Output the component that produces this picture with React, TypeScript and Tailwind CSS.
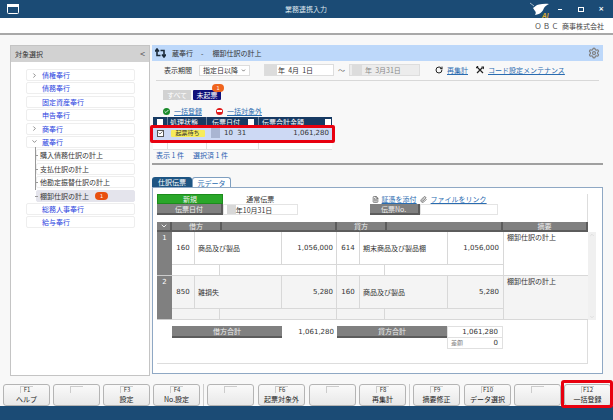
import { Check, ChevronDown, ChevronRight, Settings, RotateCw, FileText, Paperclip } from 'lucide-react'

const numFont = "[font-family:'DejaVu_Sans',sans-serif]"

interface TreeItem {
  label: string
  mark?: 'open' | 'closed'
}

const topItems: TreeItem[] = [
  { label: '債権奉行', mark: 'closed' },
  { label: '債務奉行' },
  { label: '固定資産奉行' },
  { label: '申告奉行' },
  { label: '商奉行', mark: 'closed' },
  { label: '蔵奉行', mark: 'open' },
]

const subItems = ['購入債務仕訳の計上', '支払仕訳の計上', '他勘定振替仕訳の計上', '棚卸仕訳の計上']

const fnKeys = [
  { key: 'F1', label: 'ヘルプ', after: 'mr-[3px]' },
  { key: '', label: '', after: 'mr-[3px]' },
  { key: 'F3', label: '設定', after: 'mr-[3px]' },
  { key: 'F4', label: 'No.設定', after: 'mr-[3px]', sep: true },
  { key: '', label: '', after: 'mr-[4px]' },
  { key: 'F6', label: '起票対象外', after: 'mr-[4px]' },
  { key: '', label: '', after: 'mr-[3px]' },
  { key: 'F8', label: '再集計', after: 'mr-[3px]', sep: true },
  { key: 'F9', label: '摘要修正', after: 'mr-[4px]' },
  { key: 'F10', label: 'データ選択', after: 'mr-[3px]' },
  { key: '', label: '', after: 'mr-[3px]' },
  { key: 'F12', label: '一括登録', after: '' },
]

const TreeRow = ({ item }: { item: TreeItem }) => (
  <div className="ml-[15px] flex h-[12px] w-[109px] items-center rounded-[2px] border border-[#eeeeee] bg-white">
    <span className="flex w-[15px] justify-center text-[#444444]">
      {item.mark === 'closed' && <ChevronRight size={7} strokeWidth={2} />}
      {item.mark === 'open' && <ChevronDown size={7} strokeWidth={2} />}
    </span>
    <span className="text-[#2a3fe0]">{item.label}</span>
  </div>
)

const HeadCell = ({ className, children }: { className: string; children?: React.ReactNode }) => (
  <div className={`flex items-center justify-center border-r-2 border-b-2 border-[#5c5c5c] bg-[#808080] text-[#eeeeee] ${className}`}>
    {children}
  </div>
)

const JournalRow = ({ no, dCode, dName, dAmt, cCode, cName, cAmt, tint }: {
  no: string
  dCode: string
  dName: string
  dAmt: string
  cCode: string
  cName: string
  cAmt: string
  tint: string
}) => (
  <div className={`flex h-[44px] ${tint}`}>
    <div className={`w-[15px] shrink-0 border-b border-[#cccccc] bg-[#808080] pt-[1px] text-center text-[7px] text-white ${numFont}`}>{no}</div>
    <div className="flex w-[331px] shrink-0 flex-col">
      <div className="flex h-[33px] items-center border-b border-[#d8d8d8]">
        <div className={`flex h-full w-[23px] items-center justify-center border-r border-[#d8d8d8] text-[7px] ${numFont}`}>{dCode}</div>
        <div className="flex h-full w-[87px] items-center border-r border-[#d8d8d8] pl-[3px]">{dName}</div>
        <div className={`flex h-full w-[55px] items-center justify-end border-r border-[#d8d8d8] pr-[3px] text-[7px] ${numFont}`}>{dAmt}</div>
        <div className={`flex h-full w-[23px] items-center justify-center border-r border-[#d8d8d8] text-[7px] ${numFont}`}>{cCode}</div>
        <div className="flex h-full w-[88px] items-center border-r border-[#d8d8d8] pl-[3px]">{cName}</div>
        <div className={`flex h-full w-[55px] items-center justify-end pr-[4px] text-[7px] ${numFont}`}>{cAmt}</div>
      </div>
      <div className="flex h-[11px] border-b border-[#d8d8d8]">
        <div className="w-[48px] border-r border-[#d8d8d8]" />
        <div className="w-[117px] border-r border-[#d8d8d8]" />
        <div className="w-[48px] border-r border-[#d8d8d8]" />
        <div className="w-[118px]" />
      </div>
    </div>
    <div className="w-[85px] shrink-0 border-b border-l border-[#d8d8d8] pl-[3px] leading-[11px]">棚卸仕訳の計上</div>
  </div>
)

const FnButton = ({ k }: { k: (typeof fnKeys)[number] }) => (
  <div className={`flex h-[22px] w-[47px] shrink-0 flex-col items-center rounded-[3px] border border-[#b4b4b4] bg-gradient-to-b from-[#fafafa] to-[#e8e8e8] ${k.after}`}>
    <div className="mt-[1px] flex h-[7px] w-[13px] items-center justify-center border-t border-l border-[#cccccc] text-[6px] leading-none text-[#333333]">
      {k.key}
    </div>
    <div className="mt-[1px] text-[7px] leading-[10px] text-[#222222]">{k.label}</div>
  </div>
)

export default function App() {
  return (
    <div className="flex h-[420px] w-[613px] flex-col overflow-hidden bg-[#f8f8f8] text-[7px] leading-[10px] text-[#333333] [font-family:'Noto_Sans_CJK_JP',sans-serif]">
      {/* Title bar */}
      <div className="flex h-[18px] shrink-0 items-center bg-[#1b4b75] pr-[9px] pl-[7px] text-white">
        <svg width="12" height="10" viewBox="0 0 12 10" fill="none" stroke="white">
          <rect x="0.5" y="0.5" width="11" height="9" rx="1" />
          <rect x="0.5" y="0.5" width="11" height="2" fill="white" />
        </svg>
        <span className="ml-[266px] text-[#dfe7ee]">業務連携入力</span>
        <svg className="mt-[1px] ml-auto" width="21" height="16" viewBox="0 0 21 16">
          <path d="M0 1l4 3" stroke="white" strokeWidth="0.6" />
          <path d="M3 6c2-1 3-3 6-3.500 3-.5 6-1 10-.5-2 1-4 2-5 4-1 3-3 6-9 7 1-2 1-3 0-4z" fill="white" />
          <text x="12" y="15.500" fontSize="6.500" fontWeight="700" fontStyle="italic" fill="#e0b030" fontFamily="Liberation Sans">AI</text>
        </svg>
        <span className="ml-[7px] h-[1px] w-[4px] bg-white" />
        <span className="ml-[16px] h-[5px] w-[6px] border border-white" />
        <span className={`ml-[14px] text-[7px] font-bold ${numFont}`}>×</span>
      </div>

      {/* Company strip */}
      <div className="flex h-[17px] shrink-0 items-center justify-end border-b-2 border-[#a8a8a8] bg-white pr-[9px] text-[#444444]">
        <span className="mr-[2px] tracking-[1.500px]">ＯＢＣ</span>
        <span>商事株式会社</span>
      </div>

      {/* Main */}
      <div className="flex min-h-0 flex-1 gap-[2px] pt-[10px] pl-[10px]">
        {/* Left tree */}
        <div className="flex h-[331px] w-[140px] shrink-0 flex-col border border-[#c4c4c4] bg-white">
          <div className="flex h-[16px] shrink-0 items-center justify-between bg-[#d2d2d2] px-[4px] text-[#333333]">
            <span>対象選択</span>
            <span className="text-[9px] text-[#555555]">&lt;</span>
          </div>
          <div className="flex flex-col gap-[1.400px] pt-[7px]">
            {topItems.map(item => <TreeRow key={item.label} item={item} />)}
            <div className="relative ml-[15px] flex flex-col gap-[1.400px]">
              <div className="absolute top-[-2px] left-[9px] h-[43px] w-[1px] bg-[#999999]" />
              {subItems.map((label, i) => (
                <div key={label} className="relative flex items-center pl-[10px]">
                  <span className="absolute top-[6px] left-[9px] h-[1px] w-[3px] bg-[#999999]" />
                  <div className={`flex h-[12px] w-[99px] items-center rounded-[2px] border pl-[3px] ${i === 3 ? 'border-[#e4e4ec] bg-[#e4e4ec]' : 'border-[#eeeeee] bg-white'}`}>
                    {label}
                    {i === 3 && (
                      <span className={`ml-[6px] flex h-[8px] w-[13px] items-center justify-center rounded-full bg-[#e8500f] text-[5px] text-white ${numFont}`}>1</span>
                    )}
                  </div>
                </div>
              ))}
            </div>
            <TreeRow item={{ label: '総務人事奉行' }} />
            <TreeRow item={{ label: '給与奉行' }} />
          </div>
        </div>

        {/* Right side */}
        <div className="flex w-[451px] shrink-0 flex-col">
          <div className="flex h-[16px] shrink-0 items-center bg-[#bdd8fa] pr-[2px] pl-[3px]">
            <svg width="11" height="10" viewBox="0 0 11 10" fill="none" stroke="#1a2a3a" strokeWidth="1.600">
              <path d="M2 2v5.500h3.500M0 3.500l2-2.500 2 2.500" />
              <path d="M9 8V2.500H5.500M11 6.500l-2 2.500-2-2.500" />
            </svg>
            <span className="ml-[6px]">蔵奉行</span>
            <span className="ml-[8px]">-</span>
            <span className="ml-[9px]">棚卸仕訳の計上</span>
            <Settings size={12} strokeWidth={2.500} className="mr-[1px] ml-auto text-[#808080]" />
          </div>

          {/* Condition row */}
          <div className="ml-[4px] flex h-[20px] w-[443px] shrink-0 items-center border-b border-[#d8d8d8] pb-[1px]">
            <span className="ml-[8px]">表示期間</span>
            <div className="ml-[7px] flex h-[11px] w-[51px] items-center justify-between border border-[#dddddd] bg-white px-[3px] whitespace-nowrap">
              指定日以降 <ChevronDown size={5} strokeWidth={3} />
            </div>
            <div className="ml-[14px] flex h-[12px] w-[70px] items-center border border-[#dddddd] bg-white">
              <span className="h-full w-[12px] bg-[#dcdcdc]" />
              <span className="ml-[1px] whitespace-pre">年  4月  1日</span>
            </div>
            <span className="ml-[4px] text-[#666666]">～</span>
            <div className="ml-[4px] flex h-[12px] w-[71px] items-center border border-[#dddddd] bg-[#ececec] text-[#888888]">
              <span className="ml-[2px] h-full w-[10px] bg-[#dcdcdc]" />
              <span className="ml-[3px] whitespace-pre">年  3月31日</span>
            </div>
            <RotateCw size={8} strokeWidth={3} className="ml-[15px] text-[#222222]" />
            <span className="ml-[4px] text-[#2a6cb0] underline">再集計</span>
            <svg className="ml-[8px]" width="8" height="8" viewBox="0 0 8 8" fill="none" stroke="#222222">
              <path d="M1 7l5.500-5.500M1 1l6 6" strokeWidth="1.200" />
              <path d="M0 2l2-2M5.500 1L8 1 7 3" strokeWidth="1.200" />
            </svg>
            <span className="ml-[4px] text-[#2a6cb0] underline">コード設定メンテナンス</span>
          </div>

          {/* Status chips */}
          <div className="relative mt-[9px] ml-[11px] flex h-[10px] shrink-0 gap-[2px] text-white">
            <span className="flex w-[28px] items-center justify-center bg-[#d2d2d2]">すべて</span>
            <span className="flex w-[28px] items-center justify-center rounded-[1px] bg-[#10107a]">未起票</span>
            <span className={`absolute top-[-6px] left-[49px] flex h-[8px] w-[12px] items-center justify-center rounded-full bg-[#f0651e] text-[5px] ${numFont}`}>1</span>
          </div>

          <div className="mt-[5px] ml-[11px] flex h-[12px] shrink-0 items-center text-[#2a6cb0]">
            <span className="flex h-[7px] w-[7px] items-center justify-center rounded-full bg-[#1a8a2a] text-white">
              <Check size={5} strokeWidth={4} />
            </span>
            <span className="ml-[4px] underline">一括登録</span>
            <span className="ml-[14px] flex h-[7px] w-[7px] items-center justify-center rounded-full bg-[#e01818]">
              <span className="h-[2px] w-[5px] bg-white" />
            </span>
            <span className="ml-[4px] underline">一括対象外</span>
          </div>

          {/* List table */}
          <div className="relative ml-[1px] w-[179px] shrink-0">
            <div className="flex h-[9px] bg-[#173a63] text-white">
              <div className="flex w-[15px] items-center justify-center border-r border-[#6a7f99]"><span className="h-[6px] w-[6px] bg-white" /></div>
              <div className="flex w-[39px] items-center border-r border-[#6a7f99] pl-[2px]">処理状態</div>
              <div className="flex w-[52px] items-center justify-between border-r border-[#6a7f99] pr-[4px] pl-[5px]">伝票日付<span className="h-[6px] w-[6px] bg-white" /></div>
              <div className="flex w-[73px] items-center justify-between pr-[1px] pl-[3px]">伝票合計金額<span className="h-[6px] w-[6px] bg-white" /></div>
            </div>
            <div className="flex h-[14px] bg-[#cdd9f4]">
              <div className="flex w-[15px] items-center justify-center">
                <span className="flex h-[7px] w-[7px] items-center justify-center border border-[#555555] bg-white text-[#111111]"><Check size={6} strokeWidth={3} /></span>
              </div>
              <div className="flex w-[39px] items-center justify-center">
                <span className="flex h-[7px] w-[34px] items-center justify-center rounded-[1px] bg-[#f7ec5a] text-[6px]">起票待ち</span>
              </div>
              <div className={`flex w-[52px] items-center pl-[4px] text-[7px] ${numFont}`}>
                <span className="h-[10px] w-[9px] bg-[#a9b5d2]" />
                <span className="ml-[4px] whitespace-pre">10  31</span>
              </div>
              <div className={`flex w-[73px] items-center justify-end pr-[3px] text-[7px] ${numFont}`}>1,061,280</div>
            </div>
            <div className="flex h-[10px] border-b border-[#e0e0e0] bg-white">
              <div className="w-[15px] border-r border-[#e0e0e0]" />
              <div className="w-[39px] border-r border-[#e0e0e0]" />
              <div className="w-[52px] border-r border-[#e0e0e0]" />
            </div>
            <div className="pointer-events-none absolute top-[8px] left-[-3px] h-[18px] w-[185px] rounded-[2px] border-[3px] border-[#e8000f]" />
          </div>

          <div className="ml-[4px] flex h-[10px] shrink-0 items-center gap-[9px] text-[#2a5fb0]">
            <span>表示 1 件</span>
            <span>選択済 1 件</span>
          </div>
          <div className="mt-[3px] h-[2px] w-[451px] shrink-0 bg-[#a0a0a0]" />

          {/* Tabs */}
          <div className="mt-[12px] flex h-[10px] shrink-0 items-end">
            <span className="flex h-[10px] w-[40px] items-center justify-center rounded-t-[3px] bg-[#1e5583] text-white">仕訳伝票</span>
            <span className="flex h-[10px] w-[39px] items-center justify-center rounded-t-[3px] border border-b-0 border-[#7f9fc0] bg-white text-[#2a6cb0]">元データ</span>
          </div>
          <div className="h-[187px] w-[451px] shrink-0 border border-[#8fa8c4] bg-white pt-[6px] pl-[4px]">
            <div className="h-[170px] w-[431px] border-r border-b border-[#dddddd]">
              {/* Slip header */}
              <div className="flex h-[21px]">
                <div className="flex w-[66px] flex-col text-[#eeeeee]">
                  <span className="flex h-[10px] items-center justify-center border border-[#1c8c1c] bg-[#2aa72a]">新規</span>
                  <span className="flex h-[11px] items-center justify-center border-r-2 border-b-2 border-[#5c5c5c] bg-[#808080]">伝票日付</span>
                </div>
                <div className="flex w-[75px] flex-col">
                  <span className="flex h-[10px] items-center justify-center">通常伝票</span>
                  <div className="flex h-[11px] items-center border border-[#e4e4e4]">
                    <span className="ml-[3px] h-full w-[9px] bg-[#d8d8d8]" />
                    <span>年10月31日</span>
                  </div>
                </div>
                <div className="ml-[72px] flex w-[218px] flex-col">
                  <div className="flex h-[10px] items-center text-[#2a6cb0]">
                    <FileText size={7} className="ml-[2px] text-[#333333]" />
                    <span className="ml-[3px] underline">証憑を添付</span>
                    <Paperclip size={7} className="ml-[3px] text-[#333333]" />
                    <span className="ml-[4px] underline">ファイルをリンク</span>
                  </div>
                  <div className="flex h-[11px]">
                    <span className="flex w-[50px] items-center justify-center border-r-2 border-b-2 border-[#5c5c5c] bg-[#808080] text-[#eeeeee]">伝票No.</span>
                    <span className="w-[78px] border border-[#e4e4e4]" />
                  </div>
                </div>
              </div>

              {/* Journal table */}
              <div className="mt-[7px] w-[439px]">
                <div className="flex h-[10px] w-[431px]">
                  <HeadCell className="w-[15px]"><ChevronDown size={8} strokeWidth={3} /></HeadCell>
                  <HeadCell className="w-[50px]">借方</HeadCell>
                  <HeadCell className="w-[115px]" />
                  <HeadCell className="w-[50px]">貸方</HeadCell>
                  <HeadCell className="w-[116px]" />
                  <HeadCell className="w-[85px]">摘要</HeadCell>
                </div>
                <div className="flex">
                  <div className="w-[431px]">
                    <JournalRow no="1" dCode="160" dName="商品及び製品" dAmt="1,056,000" cCode="614" cName="期末商品及び製品棚" cAmt="1,056,000" tint="bg-white" />
                    <JournalRow no="2" dCode="850" dName="雑損失" dAmt="5,280" cCode="160" cName="商品及び製品" cAmt="5,280" tint="bg-[#f4f4f4]" />
                  </div>
                  <div className="flex w-[8px] flex-col items-center justify-between bg-[#f0f0f0] text-[#cccccc]">
                    <ChevronDown size={6} className="rotate-180" />
                    <ChevronDown size={6} />
                  </div>
                </div>
              </div>

              {/* Totals */}
              <div className="mt-[6px] ml-[15px] flex">
                <span className="flex h-[12px] w-[110px] items-center justify-center border-b-2 border-[#5c5c5c] bg-[#808080] text-[#eeeeee]">借方合計</span>
                <span className={`flex h-[12px] w-[55px] items-center justify-end pr-[3px] text-[7px] ${numFont}`}>1,061,280</span>
                <span className="flex h-[12px] w-[110px] items-center justify-center border-b-2 border-[#5c5c5c] bg-[#808080] text-[#eeeeee]">貸方合計</span>
                <div className="w-[56px]">
                  <div className={`flex h-[12px] items-center justify-end border border-[#e0e0e0] pr-[4px] text-[7px] ${numFont}`}>1,061,280</div>
                  <div className="flex h-[11px] items-center justify-between border border-t-0 border-[#e0e0e0] pr-[4px] pl-[3px] text-[6px] text-[#888888]">
                    差額 <span className={`text-[7px] text-[#333333] ${numFont}`}>0</span>
                  </div>
                </div>
              </div>
            </div>
          </div>
        </div>
      </div>

      {/* Function keys */}
      <div className="relative flex h-[30px] shrink-0 items-start bg-[#f8f8f8] pt-[8px] pl-[3px]">
        {fnKeys.map((k, i) => (
          <div key={i} className="flex">
            <FnButton k={k} />
            {k.sep && <span className="mr-[3px] h-[22px] w-[1px] bg-[#cccccc]" />}
          </div>
        ))}
        <div className="pointer-events-none absolute top-[4px] right-[0px] h-[28px] w-[52px] rounded-[3px] border-[3px] border-[#e8000f]" />
      </div>
      <div className="h-[14px] shrink-0 bg-[#1b4b75]" />
    </div>
  )
}
